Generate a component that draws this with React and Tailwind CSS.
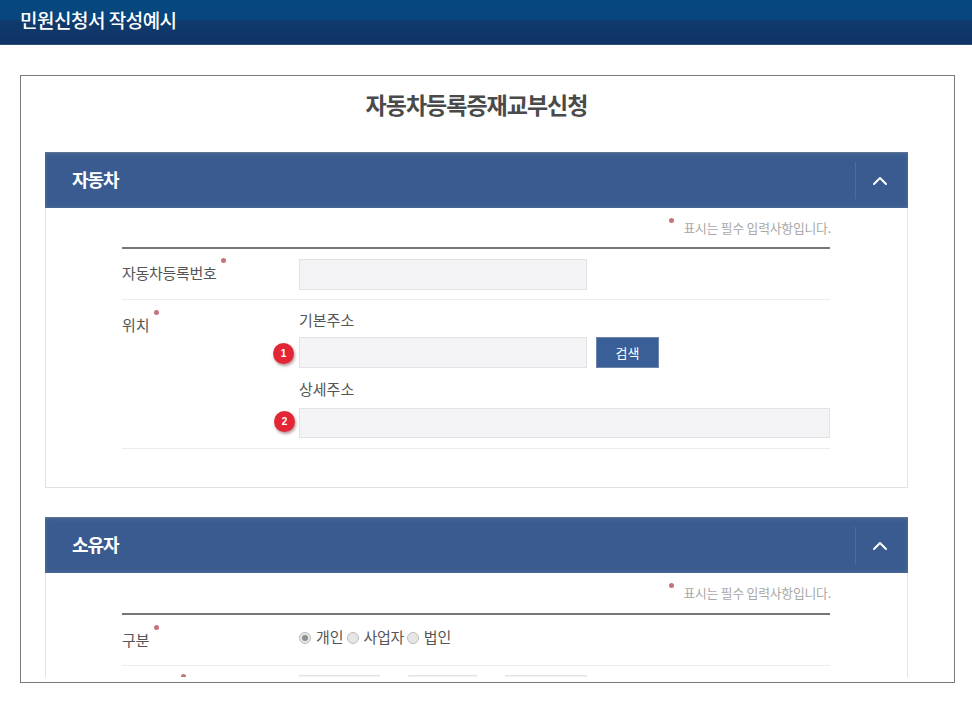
import { ChevronUp } from 'lucide-react';

function Dot({ className }) {
  return <span className={`absolute w-[5px] h-[5px] rounded-full bg-[#c4737a] ${className}`} />;
}

function SectionHead({ title }) {
  return (
    <div className="h-[56px] bg-[#3a5b8f] flex items-stretch border-t border-[#5f7290] shadow-[inset_0_0_4px_rgba(110,130,170,0.6)]">
      <div className="flex-1 pl-[27px] pt-[13px] text-[18px] leading-[26px] font-bold text-white tracking-[-1px]">{title}</div>
      <div className="my-[9px] w-[53px] border-l border-[#4d6b9c] flex items-center justify-center pr-[5px]">
        <ChevronUp size={24} strokeWidth={2} className="text-white" />
      </div>
    </div>
  );
}

function RequiredNote({ className }) {
  return (
    <div className={`relative flex justify-end items-start pt-[10px] pr-[76px] text-[12.8px] leading-[19px] text-[#a8a8a8] tracking-[-0.2px] ${className}`}>
      <span className="relative">
        <Dot className="-left-[14px] top-0" />
        표시는 필수 입력사항입니다.
      </span>
    </div>
  );
}

function Input({ className }) {
  return <div className={`bg-[#f4f3f6] border border-[#e3e3e5] ${className}`} />;
}

function Badge({ n, className }) {
  return (
    <span className={`absolute w-[21px] h-[21px] rounded-full bg-[#e32636] text-white text-[10px] font-bold flex items-center justify-center shadow-[1px_2px_3px_rgba(120,60,60,0.55)] font-['Liberation_Sans',sans-serif] ${className}`}>
      {n}
    </span>
  );
}

function Radio({ checked }) {
  return (
    <span className="w-[12px] h-[12px] rounded-full bg-[#e6e6e6] border border-[#bcbcbc] flex items-center justify-center">
      {checked && <span className="w-[6px] h-[6px] rounded-full bg-[#8f8f8f]" />}
    </span>
  );
}

export default function App() {
  return (
    <div className="h-[704px] bg-white overflow-hidden font-['Noto_Sans_CJK_KR','Noto_Sans',sans-serif]">
      <header className="h-[45px] bg-[linear-gradient(#06497f_0%,#07457d_44%,#103a6d_46%,#0f3466_100%)] border-b border-[#2a4f7c] pl-[20px] pt-[6px] text-[19px] leading-[28px] font-medium text-white tracking-[-0.5px]">
        민원신청서 작성예시
      </header>

      <div className="mt-[30px] ml-[20px] w-[935px] h-[608px] border border-[#7a7a7a] pb-[5px]">
        <div className="h-full overflow-hidden pl-[24px]">
          <h1 className="h-[76px] w-[863px] pt-[11px] text-center text-[23px] leading-[34px] font-bold text-[#4a4a4a] tracking-[-1px]">
            자동차등록증재교부신청
          </h1>

          <section className="w-[863px] h-[336px] border-x border-b border-[#e2e2e2]">
            <div className="-mx-px"><SectionHead title="자동차" /></div>
            <RequiredNote className="h-[39px]" />
            <div className="ml-[76px] w-[708px] border-t-2 border-[#777777] text-[15px] text-[#555555]">
              <div className="h-[51px] flex border-b border-[#ededed] pt-[10px]">
                <div className="w-[177px] pt-[2px] leading-[24px] tracking-[-0.3px]">
                  <span className="relative">
                    자동차등록번호
                    <Dot className="left-[99px] -top-[4px]" />
                  </span>
                </div>
                <Input className="w-[288px] h-[31px]" />
              </div>
              <div className="flex h-[149px] border-b border-[#ededed]">
                <div className="w-[177px] pt-[13px] leading-[24px]">
                  <span className="relative">
                    위치
                    <Dot className="left-[32px] -top-[4px]" />
                  </span>
                </div>
                <div className="flex-1 pt-[8px]">
                  <div className="leading-[24px] mb-[5px]">기본주소</div>
                  <div className="relative flex gap-[9px]">
                    <Badge n="1" className="-left-[26px] top-[6px]" />
                    <Input className="w-[288px] h-[31px]" />
                    <button className="w-[63px] h-[31px] bg-[#3a5f98] border border-[#6e86ab] text-white text-[13px]">검색</button>
                  </div>
                  <div className="leading-[24px] mt-[9px] mb-[7px]">상세주소</div>
                  <div className="relative">
                    <Badge n="2" className="-left-[25px] top-[3px]" />
                    <Input className="w-full h-[30px]" />
                  </div>
                </div>
              </div>
            </div>
          </section>

          <section className="mt-[29px] w-[863px] h-[200px] border-x border-[#e2e2e2]">
            <div className="-mx-px"><SectionHead title="소유자" /></div>
            <RequiredNote className="h-[40px]" />
            <div className="ml-[76px] w-[708px] border-t-2 border-[#777777] text-[15px] text-[#555555]">
              <div className="h-[51px] flex border-b border-[#ededed]">
                <div className="w-[177px] pt-[13px] leading-[24px]">
                  <span className="relative">
                    구분
                    <Dot className="left-[32px] -top-[4px]" />
                  </span>
                </div>
                <div className="flex items-center h-[45px]">
                  <Radio checked />
                  <span className="ml-[5px] mr-[3px]">개인</span>
                  <Radio />
                  <span className="ml-[5px] mr-[3px] tracking-[-0.4px]">사업자</span>
                  <Radio />
                  <span className="ml-[5px]">법인</span>
                </div>
              </div>
              <div className="flex pt-[9px]">
                <div className="w-[177px] relative"><Dot className="left-[59px] -top-[1px]" /></div>
                <Input className="w-[81px] h-[31px]" />
                <Input className="w-[69px] h-[31px] ml-[28px]" />
                <Input className="w-[82px] h-[31px] ml-[28px]" />
              </div>
            </div>
          </section>
        </div>
      </div>
    </div>
  );
}
